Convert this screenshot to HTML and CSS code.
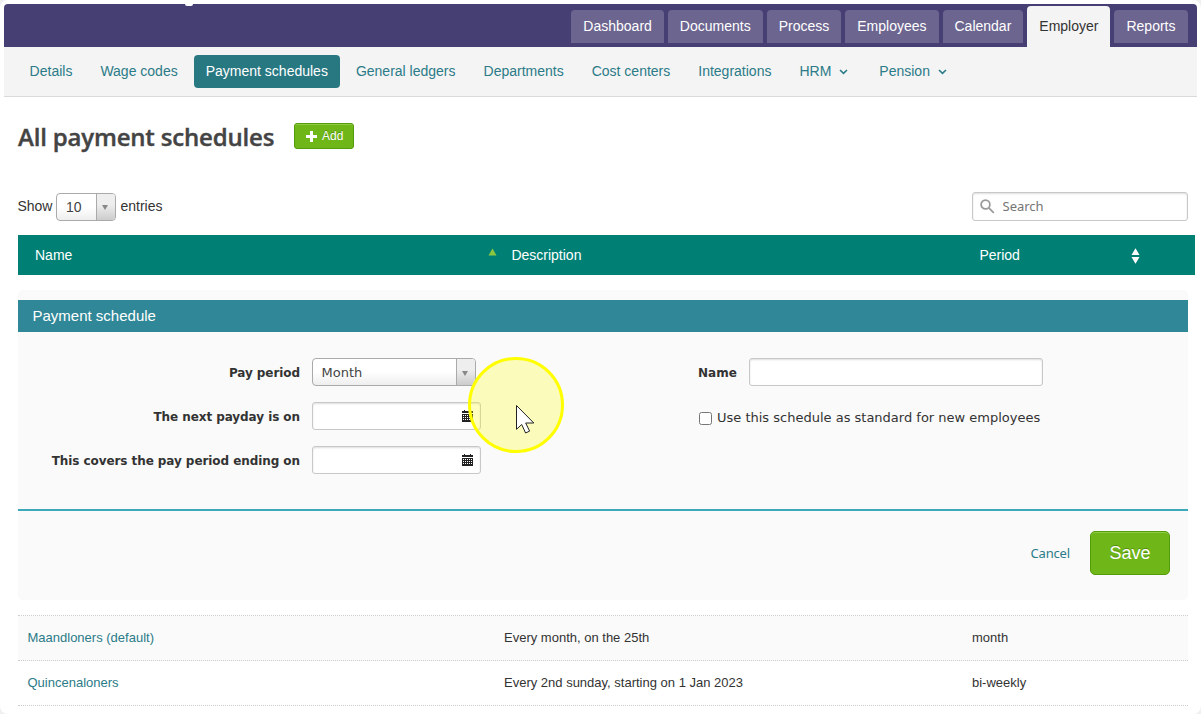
FILE: index.html
```
<!DOCTYPE html>
<html lang="en">
<head>
    <meta charset="UTF-8">
    <meta name="viewport" content="width=device-width, initial-scale=1.0">
    <title>Payment schedules</title>
    <link rel="stylesheet" href="styles.css">
</head>
<body>
    <div class="page">
        <!-- Main navigation -->
        <header class="header">
            <span class="logo-tail"></span>
            <nav class="tabs">
                <a href="#">Dashboard</a>
                <a href="#">Documents</a>
                <a href="#">Process</a>
                <a href="#">Employees</a>
                <a href="#">Calendar</a>
                <a href="#" class="active">Employer</a>
                <a href="#">Reports</a>
            </nav>
        </header>

        <!-- Sub navigation -->
        <nav class="subnav">
            <a href="#">Details</a>
            <a href="#">Wage codes</a>
            <a href="#" class="active">Payment schedules</a>
            <a href="#">General ledgers</a>
            <a href="#">Departments</a>
            <a href="#">Cost centers</a>
            <a href="#">Integrations</a>
            <a href="#">HRM<svg class="chevron" width="9" height="6" viewBox="0 0 9 6"><path d="M1 1l3.5 3.3L8 1"/></svg></a>
            <a href="#">Pension<svg class="chevron" width="9" height="6" viewBox="0 0 9 6"><path d="M1 1l3.5 3.3L8 1"/></svg></a>
        </nav>

        <main class="content">
            <div class="title-row">
                <h1>All payment schedules</h1>
                <button class="btn btn-add"><svg width="11" height="11" viewBox="0 0 11 11"><path d="M4 0h3v4h4v3H7v4H4V7H0V4h4z" fill="#fff"/></svg>Add</button>
            </div>

            <div class="toolbar">
                <div class="length">
                    <span>Show</span>
                    <div class="select select-small"><span>10</span><i></i></div>
                    <span>entries</span>
                </div>
                <label class="search">
                    <svg width="15" height="15" viewBox="0 0 15 15"><circle cx="5.5" cy="5.5" r="4.4"/><path d="M8.8 8.8l5 5"/></svg>
                    <input type="text" placeholder="Search">
                </label>
            </div>

            <div class="grid table-head">
                <div>Name<svg class="sort-up" width="9" height="8" viewBox="0 0 9 8"><path d="M4.5 0.5L8.5 7.5h-8z" fill="#8cc63f"/></svg></div>
                <div>Description</div>
                <div>Period<svg class="sort-both" width="9" height="16" viewBox="0 0 9 16"><path d="M4.5 0.3L8.5 7h-8zM0.5 9h8l-4 6.7z" fill="#fff"/></svg></div>
            </div>

            <!-- Edit form -->
            <section class="panel">
                <h2>Payment schedule</h2>
                <form class="form">
                    <div class="form-left">
                        <label>Pay period</label>
                        <div class="select select-period"><span>Month</span><i></i></div>
                        <label>The next payday is on</label>
                        <div class="input date"><svg width="11" height="12" viewBox="0 0 11 12"><path d="M0 1h2V0h1v1h5V0h1v1h2v2H0zM0 4h11v8H0z" fill="#222"/><path d="M1 5.5h9M1 7.5h9M1 9.5h9" stroke="#fff" stroke-dasharray="1 1"/></svg></div>
                        <label>This covers the pay period ending on</label>
                        <div class="input date"><svg width="11" height="12" viewBox="0 0 11 12"><path d="M0 1h2V0h1v1h5V0h1v1h2v2H0zM0 4h11v8H0z" fill="#222"/><path d="M1 5.5h9M1 7.5h9M1 9.5h9" stroke="#fff" stroke-dasharray="1 1"/></svg></div>
                    </div>
                    <div class="form-right">
                        <div class="name-row">
                            <label>Name</label>
                            <input type="text" class="input name">
                        </div>
                        <label class="check"><input type="checkbox"><span>Use this schedule as standard for new employees</span></label>
                    </div>
                </form>
                <div class="actions">
                    <a href="#">Cancel</a>
                    <button class="btn btn-save">Save</button>
                </div>
            </section>

            <div class="rows">
                <div class="grid row">
                    <div><a href="#">Maandloners (default)</a></div>
                    <div>Every month, on the 25th</div>
                    <div>month</div>
                </div>
                <div class="grid row">
                    <div><a href="#">Quincenaloners</a></div>
                    <div>Every 2nd sunday, starting on 1 Jan 2023</div>
                    <div>bi-weekly</div>
                </div>
            </div>
        </main>
    </div>

    <!-- Pointer highlight -->
    <div class="pointer">
        <svg width="96" height="96" viewBox="0 0 96 96">
            <circle cx="48" cy="48" r="46.5" fill="#ffff00" fill-opacity="0.25" stroke="#ffff00" stroke-width="3"/>
            <path d="M48.5 48.5v23.8l5.2-4.8 3.9 8.5 4-1.9-3.9-8.1h8.1z" fill="#fff" stroke="#222" stroke-width="1"/>
        </svg>
    </div>
</body>
</html>
```
FILE: styles.css
```
* {
    box-sizing: border-box;
}

body {
    margin: 0;
    background-color: #f0f0f0;
    font-family: "Liberation Sans", Arial, sans-serif;
    font-size: 14px;
    color: #333;
}

a {
    color: #2b7b88;
    text-decoration: none;
}

.page {
    height: 714px;
    padding: 4px 4px 0;
    background-color: #fff;
    border-radius: 8px;
    overflow: hidden;
}

.header {
    display: flex;
    justify-content: space-between;
    align-items: flex-start;
    height: 43px;
    padding-right: 9.5px;
    background-color: #463f73;
    border-radius: 4px 4px 0 0;
}

.logo-tail {
    width: 8px;
    height: 2px;
    margin-left: 181px;
    background-color: #fff;
    border-radius: 0 0 4px 4px;
}

.tabs {
    display: flex;
    align-items: flex-start;
    gap: 4px;
    padding-top: 2px;
}

.tabs a {
    height: 33px;
    margin-top: 4px;
    padding: 0 12px;
    line-height: 33px;
    color: #fff;
    background-color: #6c658f;
    border-radius: 4px 4px 0 0;
}

.tabs a.active {
    height: 41px;
    margin-top: 0;
    line-height: 41px;
    color: #333;
    background-color: #f4f4f4;
}

.subnav {
    display: flex;
    gap: 4px;
    height: 50px;
    padding: 8px 13.6px;
    background-color: #f4f4f4;
    border-bottom: 1px solid #dadada;
}

.subnav a {
    height: 33px;
    padding: 0 12px;
    line-height: 33px;
    border-radius: 4px;
}

.subnav a.active {
    color: #fff;
    background-color: #287882;
}

.chevron {
    margin: 0 3px 1px 8px;
    fill: none;
    stroke: #2b7b88;
    stroke-width: 1.6;
}

.content {
    padding: 0 9px 0 14px;
}

.title-row {
    display: flex;
    align-items: flex-start;
    height: 95px;
    padding-top: 26px;
}

h1 {
    width: 276px;
    margin: 0;
    font-family: "Trebuchet MS", "Open Sans", sans-serif;
    font-size: 24px;
    font-weight: 600;
    line-height: 28px;
    letter-spacing: -0.18px;
    white-space: nowrap;
    color: #444;
    -webkit-text-stroke: 0.4px #444;
}

.btn {
    font-family: "Liberation Sans", Arial, sans-serif;
    color: #fff;
    background-color: #6fb718;
    border: 1px solid #559c0b;
    box-shadow: inset 0 1px 0 #8fcb43;
    text-shadow: 0 -1px 0 #55900f;
    cursor: pointer;
}

.btn-add {
    display: flex;
    align-items: center;
    gap: 5px;
    width: 60px;
    height: 26px;
    padding: 0 9px 0 11px;
    font-size: 12px;
    border-radius: 3px;
}

.btn-add svg {
    flex: none;
}

.toolbar {
    display: flex;
    justify-content: space-between;
    height: 43px;
}

.length {
    display: flex;
    align-items: center;
    gap: 4px;
    height: 28px;
    margin-left: -0.6px;
}

.select {
    display: flex;
    height: 28px;
    margin-top: 1px;
    line-height: 27px;
    color: #444;
    background: linear-gradient(#fff 50%, #eee);
    border: 1px solid #aaa;
    border-radius: 4px;
    overflow: hidden;
}

.select span {
    flex: 1;
    padding-left: 8.5px;
}

.select i {
    display: flex;
    align-items: center;
    justify-content: center;
    width: 19px;
    background: linear-gradient(#eee 40%, #ccc);
    border-left: 1px solid #aaa;
}

.select i::after {
    content: "";
    margin: 2px 2px 0 0;
    border: 3px solid transparent;
    border-top: 5px solid #888;
    border-bottom: 0;
}

.select-small {
    width: 60px;
}

.search {
    display: flex;
    align-items: center;
    width: 216px;
    height: 29px;
    padding: 0 7px;
    background-color: #fff;
    border: 1px solid #c8c8c8;
    border-radius: 3px;
    box-shadow: inset 0 1px 2px #ddd;
}

.search svg {
    fill: none;
    stroke: #999;
    stroke-width: 1.7;
}

.search input {
    width: 170px;
    padding: 0 0 2px 7.5px;
    font-family: "Noto Sans", sans-serif;
    font-size: 13px;
    background: none;
    border: 0;
}

.grid {
    display: grid;
    grid-template-columns: 476px 468px 1fr;
}

.table-head {
    height: 40px;
    margin-right: -7px;
    line-height: 40px;
    color: #fff;
    background-color: #008075;
}

.table-head div {
    display: flex;
    justify-content: space-between;
    padding-left: 17.4px;
}

.table-head div:first-child {
    padding-left: 17px;
}

.sort-up {
    margin: 13px -3px 0 0;
}

.sort-both {
    margin: 13px 55px 0 0;
}

.panel {
    height: 310px;
    margin-top: 15px;
    padding-top: 10px;
    background-color: #fafafa;
    border-radius: 5px;
}

h2 {
    height: 32px;
    margin: 0;
    padding-left: 14.5px;
    font-size: 15px;
    font-weight: normal;
    line-height: 32px;
    color: #fff;
    background-color: #2f8797;
}

.form {
    display: flex;
    height: 179px;
    padding-top: 26px;
    font-family: Verdana, "DejaVu Sans", sans-serif;
    font-size: 12px;
    border-bottom: 2px solid #3ba9b9;
}

.form-left {
    display: grid;
    grid-template-columns: 282px 169px;
    grid-auto-rows: 28px;
    gap: 16px 12px;
    width: 680px;
    line-height: 30px;
    font-weight: bold;
    letter-spacing: -0.07px;
    text-align: right;
}

.select-period {
    width: 164px;
    margin-top: 0;
    font-size: 13px;
    font-weight: normal;
    letter-spacing: 0;
    text-align: left;
}

.input {
    height: 28px;
    background-color: #fff;
    border: 1px solid #c8c8c8;
    border-radius: 3px;
    box-shadow: inset 0 1px 2px #ddd;
}

.date {
    display: flex;
    align-items: center;
    justify-content: flex-end;
    padding-right: 7px;
}

.name-row {
    display: flex;
    gap: 12px;
    height: 28px;
    line-height: 30px;
    font-weight: bold;
}

.name {
    width: 294px;
}

.check {
    display: flex;
    align-items: center;
    gap: 5px;
    height: 20px;
    margin-top: 22px;
    font-size: 13px;
    white-space: nowrap;
}

.check span {
    margin-top: -2px;
}

.check input {
    width: 13px;
    height: 13px;
    margin: 1px 0 0 1px;
}

.actions {
    display: flex;
    align-items: center;
    justify-content: flex-end;
    gap: 20px;
    height: 84px;
    padding-right: 18px;
}

.actions a {
    font-family: "Noto Sans", sans-serif;
    font-size: 13px;
    letter-spacing: -0.15px;
}

.btn-save {
    width: 80px;
    height: 44px;
    font-size: 18px;
    border-radius: 5px;
}

.rows {
    margin-top: 15px;
    font-size: 13px;
    border-top: 1px dotted #ccc;
}

.row {
    height: 45px;
    line-height: 44px;
    border-bottom: 1px dotted #ccc;
}

.row:first-child {
    background-color: #fafafa;
}

.row div {
    padding-left: 10px;
}

.row div:first-child {
    padding-left: 9.5px;
}

.pointer {
    position: absolute;
    top: 357px;
    left: 468px;
    width: 96px;
    height: 96px;
    pointer-events: none;
}
```
